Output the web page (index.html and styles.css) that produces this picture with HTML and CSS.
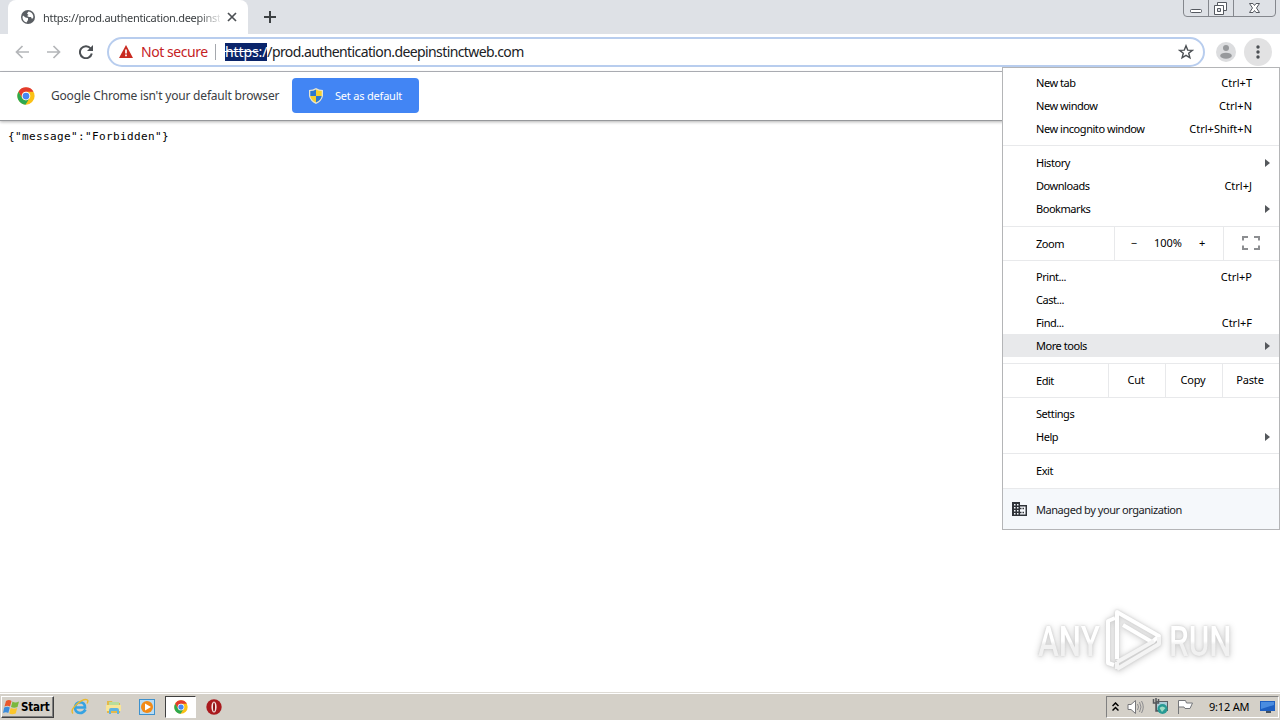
FILE: index.html
```html
<!DOCTYPE html>
<html lang="en">
<head>
  <meta charset="UTF-8">
  <title>prod.authentication.deepinstinctweb.com</title>
  <link rel="stylesheet" href="styles.css">
</head>
<body>
  <svg width="0" height="0" class="defs">
    <symbol id="chrome" viewBox="0 0 48 48">
      <circle cx="24" cy="24" r="23" fill="#fbc116"/>
      <path d="M4 12.5A23 23 0 0 1 44 12.5H24A11.5 11.5 0 0 0 14 18.3L14 30Z" fill="#e33b2e"/>
      <path d="M4 12.5A23 23 0 0 0 22.5 47L32.5 31.5A11.500 11.500 0 0 1 14 29.800Z" fill="#2da94f"/>
      <circle cx="24" cy="24" r="11.500" fill="#fff"/>
      <circle cx="24" cy="24" r="9" fill="#4587f3"/>
    </symbol>
  </svg>

  <div class="tabstrip">
    <div class="tab">
      <svg class="globe" width="14" height="14" viewBox="0 0 14 14">
        <circle cx="7" cy="7" r="7" fill="#5a5e63"/>
        <path d="M2 5.500L4.500 7.500L7 8V10L5.500 12.500C3 12 1.300 9.500 1.500 7ZM7.500 1.500L6 3.500L7.500 5L6 6L8 7H10L11 9L12.300 7.500C12.700 4.500 10.500 2 7.500 1.500Z" fill="#fff"/>
      </svg>
      <span class="tab-title">https://prod.authentication.deepinst</span>
      <svg width="10" height="10" viewBox="0 0 10 10"><path d="M1 1L9 9M9 1L1 9" stroke="#4c5054" stroke-width="1.700"/></svg>
    </div>
    <svg class="new-tab" width="12" height="12" viewBox="0 0 12 12"><path d="M6 0V12M0 6H12" stroke="#3c4043" stroke-width="2"/></svg>
    <svg class="window-buttons" width="93" height="17" viewBox="0 0 93 17">
      <path d="M.5 0V13Q.5 16.500 4 16.500H89Q92.500 16.500 92.500 13V0M25.500 0V16M50.500 0V16" fill="none" stroke="#84878d"/>
      <rect x="7.500" y="9.500" width="11" height="3" rx="1" fill="#fff" stroke="#555960"/>
      <path d="M34.500 2.500H43.500V10.500H34.500Z" fill="#fff" stroke="#555960"/>
      <path d="M31.500 5.500H40.500V14.500H31.500Z" fill="#fff" stroke="#555960"/>
      <path d="M34.500 8.500H37.500V11.500H34.500Z" fill="#dee1e6" stroke="#555960"/>
      <path d="M66.500 3.500H70L71.500 5.500L73 3.500H76.500L73.500 8L76.500 12.500H73L71.500 10.500L70 12.500H66.500L69.500 8Z" fill="#fff" stroke="#555960"/>
    </svg>
  </div>

  <div class="toolbar">
    <svg width="14" height="14" viewBox="0 0 14 14" fill="none" stroke="#b4b6b9" stroke-width="1.700"><path d="M14 7H1.500M7.500 1L1.500 7L7.500 13"/></svg>
    <svg width="14" height="14" viewBox="0 0 14 14" fill="none" stroke="#b4b6b9" stroke-width="1.700"><path d="M0 7H12.500M6.500 1L12.500 7L6.500 13"/></svg>
    <svg width="14" height="14" viewBox="0 0 14 14"><path d="M11.700 3.500A6 6 0 1 0 12.800 8.500" fill="none" stroke="#4c5054" stroke-width="2"/><path d="M14 0V6H8Z" fill="#4c5054"/></svg>
    <div class="omnibox">
      <svg width="14" height="13" viewBox="0 0 14 13"><path d="M7 0L14 13H0Z" fill="#c92b21"/><path d="M7 4.500V8.500M7 9.500V11.200" stroke="#fff" stroke-width="1.700"/></svg>
      <span class="not-secure">Not secure</span>
      <span class="divider"></span>
      <span class="url"><span class="selected"><s>https</s>:/</span>/prod.authentication.deepinstinctweb.com</span>
      <svg class="star" width="16" height="16" viewBox="0 0 16 16"><path d="M8 1.800L9.700 6.100L14.300 6.400L10.700 9.300L11.900 13.800L8 11.300L4.100 13.800L5.300 9.300L1.700 6.400L6.300 6.100Z" fill="none" stroke="#4c5054" stroke-width="1.400"/></svg>
    </div>
    <svg class="avatar" width="20" height="20" viewBox="0 0 20 20"><circle cx="10" cy="10" r="10" fill="#dcdddf"/><circle cx="10" cy="6" r="3" fill="#97999c"/><ellipse cx="10" cy="13.700" rx="5.800" ry="3" fill="#97999c"/></svg>
    <svg class="dots" width="28" height="28" viewBox="0 0 28 28"><circle cx="14" cy="14" r="14" fill="#e2e2e3"/><g fill="#4c5054"><circle cx="14" cy="9" r="1.700"/><circle cx="14" cy="14" r="1.700"/><circle cx="14" cy="19" r="1.700"/></g></svg>
  </div>

  <div class="infobar">
    <svg width="18" height="18"><use href="#chrome"/></svg>
    <span class="info-text">Google Chrome isn't your default browser</span>
    <button class="set-default">
      <svg width="14" height="16" viewBox="0 0 14 16">
        <path d="M7 0Q10 2 14 2V8Q13 13 7 16Q1 13 0 8V2Q4 2 7 0Z" fill="#e8e5cf"/>
        <path d="M7 1.500V8H1.300V3Q4.500 3 7 1.500ZM7 8H12.700Q12 12 7 14.600Z" fill="#2d78cf"/>
        <path d="M7 1.500V8H12.700V3Q9.500 3 7 1.500ZM7 8H1.300Q2 12 7 14.600Z" fill="#f6d02e"/>
      </svg>
      <span>Set as default</span>
    </button>
  </div>

  <pre class="page">{"message":"Forbidden"}</pre>

  <div class="menu">
    <div class="group first">
      <div class="item">New tab<span class="key">Ctrl+T</span></div>
      <div class="item">New window<span class="key">Ctrl+N</span></div>
      <div class="item">New incognito window<span class="key">Ctrl+Shift+N</span></div>
    </div>
    <div class="group">
      <div class="item">History<span class="arrow"></span></div>
      <div class="item">Downloads<span class="key">Ctrl+J</span></div>
      <div class="item">Bookmarks<span class="arrow"></span></div>
    </div>
    <div class="controls">
      <span class="label">Zoom</span>
      <div class="zoom">
        <span>−</span><span>100%</span><span>+</span>
      </div>
      <div class="fullscreen">
        <svg width="18" height="14" viewBox="0 0 18 14"><path d="M1 4.500V1H6M12 1H17V4.500M17 9.500V13H12M6 13H1V9.500" fill="none" stroke="#8c8e91" stroke-width="2"/></svg>
      </div>
    </div>
    <div class="group tools">
      <div class="item">Print...<span class="key">Ctrl+P</span></div>
      <div class="item">Cast...</div>
      <div class="item">Find...<span class="key">Ctrl+F</span></div>
      <div class="item active">More tools<span class="arrow"></span></div>
    </div>
    <div class="controls">
      <span class="label edit">Edit</span>
      <span class="cell">Cut</span>
      <span class="cell">Copy</span>
      <span class="cell">Paste</span>
    </div>
    <div class="group settings">
      <div class="item">Settings</div>
      <div class="item">Help<span class="arrow"></span></div>
    </div>
    <div class="group">
      <div class="item">Exit</div>
    </div>
    <div class="managed">
      <svg width="15" height="14" viewBox="0 0 15 14">
        <path d="M0 0H8V3H15V14H0Z" fill="#2f3338"/>
        <path d="M2 2H3.500V3.500H2ZM5 2H6.500V3.500H5ZM2 5H3.500V6.500H2ZM5 5H6.500V6.500H5ZM2 8H3.500V9.500H2ZM5 8H6.500V9.500H5ZM2 11H3.500V12.500H2ZM5 11H6.500V12.500H5ZM8 4.500H13.500V12.500H8Z" fill="#f7fafd"/>
        <path d="M8 6.500H9.500M8 10.500H9.500M10.500 6.500H12M10.500 10.500H12" stroke="#2f3338" stroke-width="1.500"/>
      </svg>
      <span>Managed by your organization</span>
    </div>
  </div>

  <div class="watermark">
    <span>ANY</span>
    <svg width="58" height="66" viewBox="0 0 58 66" fill="none" stroke="#fff" stroke-width="4" stroke-linejoin="round">
      <path d="M11 51V4L53 28L46 34L17 17"/>
      <path d="M9 10L2 13V55L8 57"/>
      <path d="M11 54L48 33M11 61L53 36V29M11 54V61" stroke="#f4f4f4"/>
    </svg>
    <span>RUN</span>
  </div>

  <div class="taskbar">
    <div class="start">
      <svg width="17" height="16" viewBox="0 0 17 16">
        <path d="M3 2Q6 0 8.500 2L7 7.500Q4.500 6 1.500 7.500Z" fill="#e9572b"/>
        <path d="M9.500 2.500Q12 4.500 16 2.500L14.500 8Q11 9.500 8 8Z" fill="#7ab83c"/>
        <path d="M1.200 8.500Q4.500 7 6.800 8.500L5.300 14Q3 12.500 0 14Z" fill="#3b8cdb"/>
        <path d="M7.700 9Q11 10.500 14.200 9L12.700 14.500Q9 16 6.200 14.500Z" fill="#fbc62b"/>
      </svg>
      <span>Start</span>
    </div>
    <div class="quick">
      <svg width="18" height="18" viewBox="0 0 18 18">
        <path d="M14.500 11.500Q12.500 15 9 15Q4 14.500 4 9.500Q4.500 4.500 9 4.300Q14 4.500 14 9.500H5" fill="none" stroke="#36a3e2" stroke-width="2.600"/>
        <path d="M2 15.500Q-1 12 6 6Q13 0 16.500 2Q17.500 3 16 5.500" fill="none" stroke="#e9b92e" stroke-width="1.400"/>
      </svg>
      <svg width="16" height="16" viewBox="0 0 16 16">
        <path d="M1 2H6L7 4H14V14H1Z" fill="#e4b949"/>
        <path d="M3 3H13V8H3Z" fill="#b9dd9b"/>
        <path d="M0 6H15V12H0Z" fill="#f8e597"/>
        <path d="M3 15V11Q3 9 5 9H11Q13 9 13 11V15H11V12H5V15Z" fill="#5eb3e2"/>
      </svg>
      <svg width="16" height="16" viewBox="0 0 16 16">
        <rect x=".5" y=".5" width="15" height="15" fill="#b8dcf4" stroke="#3d91cd"/>
        <circle cx="8" cy="8" r="6" fill="#f28a16"/>
        <path d="M6 4.500L12 8L6 11.500Z" fill="#fff"/>
      </svg>
      <div class="running"><svg width="14" height="14"><use href="#chrome"/></svg></div>
      <svg width="16" height="16" viewBox="0 0 16 16">
        <circle cx="8" cy="8" r="7.700" fill="#a91a1e"/>
        <ellipse cx="8" cy="8" rx="2.600" ry="5.500" fill="#f6e7e5"/>
        <ellipse cx="8" cy="8" rx="1" ry="4.500" fill="#8c1014"/>
      </svg>
    </div>
    <div class="tray">
      <svg width="7" height="10" viewBox="0 0 7 10"><path d="M.5 4L3.500 1L6.500 4M.5 8.500L3.500 5.500L6.500 8.500" fill="none" stroke="#000" stroke-width="1.500"/></svg>
      <svg width="17" height="16" viewBox="0 0 17 16"><path d="M1 5.500H4L8.500 1.500V14.500L4 10.500H1Z" fill="#fff" stroke="#77777a"/><path d="M10.500 5Q12.500 8 10.500 11M12.500 3Q15.500 8 12.500 13M14.500 2Q18 8 14.500 14" fill="none" stroke="#8b8b8e"/></svg>
      <svg width="17" height="17" viewBox="0 0 17 17">
        <rect x="4.500" y="3.500" width="11" height="9" fill="#a9cdd8" stroke="#5b5f63"/>
        <path d="M1.500 1V5H6.500V1M4 0V13H8" fill="none" stroke="#55585c" stroke-width="1.500"/>
        <circle cx="10.500" cy="11" r="5" fill="#279a94"/><path d="M7.500 10Q10 7 13.500 10L10 14Z" fill="#9cdbc3"/>
      </svg>
      <svg width="16" height="16" viewBox="0 0 16 16"><path d="M1.500 15V1.500H8.500L9.500 4H15.500L13 9.500H8L7 8H2" fill="#fff" stroke="#75777a"/></svg>
      <span class="clock">9:12 AM</span>
      <svg width="16" height="14" viewBox="0 0 16 14"><path d="M0 1H15V11H0Z" fill="#1e5fc1"/><path d="M1 2H14V5L1 9Z" fill="#4a8ce0"/><path d="M6 11H11V13H6Z" fill="#43515f"/></svg>
    </div>
  </div>
</body>
</html>
```
FILE: styles.css
```css
* {
  box-sizing: border-box;
}

body {
  width: 1280px;
  height: 720px;
  margin: 0;
  overflow: hidden;
  display: flex;
  flex-direction: column;
  position: relative;
  background: #fff;
  font-family: "Noto Sans", sans-serif;
  font-size: 11px;
  color: #000;
}

svg {
  display: block;
  flex: none;
}

.defs {
  position: absolute;
}

.tabstrip {
  height: 34px;
  flex: none;
  display: flex;
  background: #dee1e6;
  padding-left: 8px;
}

.tab {
  width: 240px;
  display: flex;
  align-items: center;
  background: #fff;
  border-radius: 8px 8px 0 0;
  padding: 0 0 0 13px;
}

.tab-title {
  width: 177px;
  margin: 0 7px 0 8px;
  white-space: nowrap;
  color: #3c4043;
  letter-spacing: -0.3px;
  mask-image: linear-gradient(to right, #000 155px, transparent 180px);
}

.new-tab {
  margin: 11px 0 0 16px;
}

.window-buttons {
  margin-left: auto;
  margin-right: 4px;
}

.toolbar {
  height: 38px;
  flex: none;
  display: flex;
  align-items: center;
  padding: 0 8px 2px 15px;
  gap: 18px;
  border-bottom: 1px solid #b3b5bb;
}

.omnibox {
  width: 1098px;
  height: 30px;
  margin-left: -4px;
  display: flex;
  align-items: center;
  padding: 0 9px 0 10px;
  border: 2px solid #b8cdee;
  border-radius: 15px;
  font-size: 14px;
}

.not-secure {
  margin-left: 8px;
  width: 67px;
  white-space: nowrap;
  color: #c5221f;
  letter-spacing: -0.45px;
}

.divider {
  width: 1px;
  height: 16px;
  margin: 0 9px 0 7px;
  background: #a5a8ad;
}

.url {
  color: #202124;
  white-space: nowrap;
  letter-spacing: -0.6px;
}

.selected {
  display: inline-block;
  height: 18px;
  line-height: 18px;
  background: #0a246a;
  color: #fff;
  letter-spacing: -0.1px;
}

.star {
  margin-left: auto;
}

.avatar {
  margin-left: -7px;
}

.dots {
  margin-left: -10px;
}

.infobar {
  height: 49px;
  flex: none;
  display: flex;
  align-items: center;
  padding: 0 0 1px 17px;
  border-bottom: 1px solid #96989b;
  box-shadow: 0 1px 3px rgba(0, 0, 0, 0.3);
  font-size: 12px;
  color: #3c4043;
}

.info-text {
  width: 241px;
  padding-left: 16px;
  white-space: nowrap;
  letter-spacing: -0.19px;
}

.set-default {
  width: 127px;
  height: 35px;
  margin-left: 16px;
  display: flex;
  align-items: center;
  gap: 12px;
  padding: 0 0 0 17px;
  border: none;
  border-radius: 4px;
  background: #4285f4;
  color: #fff;
  font-family: inherit;
  font-size: 11px;
  letter-spacing: -0.2px;
  white-space: nowrap;
}

.page {
  flex: 1;
  margin: 0;
  padding: 9px 8px;
  font: 11px/14px "DejaVu Sans Mono", monospace;
  letter-spacing: 0.38px;
}

.menu {
  position: absolute;
  left: 1002px;
  top: 67px;
  width: 278px;
  height: 463px;
  background: #fff;
  border: 1px solid #b4b5b7;
  letter-spacing: -0.45px;
}

.group {
  padding: 5px 0 6px;
  border-bottom: 1px solid #e8e9eb;
}

.group.first {
  padding: 3px 0 5px;
}

.group.tools {
  padding-top: 4px;
}

.group.settings {
  padding: 4px 0 5px;
}

.item {
  height: 23px;
  display: flex;
  align-items: center;
  justify-content: space-between;
  padding: 0 27px 0 33px;
}

.item.active {
  background: #e8e9eb;
}

.key {
  letter-spacing: 0;
}

.arrow {
  margin-right: -18px;
  border-left: 5px solid #55585c;
  border-top: 4px solid transparent;
  border-bottom: 4px solid transparent;
}

.controls {
  height: 34px;
  display: flex;
  align-items: center;
  border-bottom: 1px solid #e8e9eb;
}

.label {
  width: 111px;
  padding-left: 33px;
}

.label.edit {
  width: 105px;
}

.zoom,
.fullscreen,
.cell {
  height: 33px;
  display: flex;
  align-items: center;
  justify-content: center;
  border-left: 1px solid #e8e9eb;
  padding: 0 2px 2px 0;
}

.zoom {
  width: 109px;
  gap: 17px;
  letter-spacing: 0;
}

.fullscreen {
  flex: 1;
}

.cell {
  width: 57px;
  letter-spacing: -0.2px;
}

.managed {
  height: 40px;
  display: flex;
  align-items: center;
  gap: 9px;
  padding-left: 9px;
  background: #f5f8fb;
  color: #202124;
}

.watermark {
  position: absolute;
  left: 1038px;
  top: 608px;
  display: flex;
  align-items: center;
  gap: 5px;
  font: 500 43px/66px "Roboto", sans-serif;
  filter: drop-shadow(0 0 1px #ccc) drop-shadow(0 1px 3px #ccc);
}

.watermark span {
  width: 63px;
  transform: scaleX(0.73);
  transform-origin: left;
  color: transparent;
  background: linear-gradient(#fff 50%, #f1f1f1 55%);
  background-clip: text;
  /* keeps the gradient under the part that overflows before scaling */
  padding-right: 30px;
  margin-right: -30px;
  box-sizing: content-box;
}

.taskbar {
  height: 28px;
  flex: none;
  display: flex;
  align-items: center;
  background: #d4d0c8;
  border-top: 1px solid #dedbd5;
  box-shadow: inset 0 1px #fff;
  padding: 0 0 0 1px;
}

.start {
  width: 53px;
  height: 22px;
  display: flex;
  align-items: center;
  gap: 1px;
  padding-left: 1px;
  border: 1px solid;
  border-color: #fff #404040 #404040 #fff;
  box-shadow: inset -1px -1px #808080;
  font: bold 11.5px "DejaVu Sans Condensed", sans-serif;
  letter-spacing: -0.2px;
}

.quick {
  display: flex;
  align-items: center;
  margin-left: 17px;
}

.quick > svg {
  margin-right: 17px;
}

.quick > svg:nth-child(3) {
  margin-right: 10px;
}

.running {
  width: 31px;
  height: 22px;
  display: flex;
  align-items: center;
  justify-content: center;
  margin-right: 10px;
  background: #fff;
  border: 1px solid;
  border-color: #404040 #fff #fff #404040;
}

.tray {
  width: 173px;
  height: 22px;
  margin-left: auto;
  margin-right: 1px;
  display: flex;
  align-items: center;
  padding-left: 5px;
  gap: 8px;
  border: 1px solid;
  border-color: #808080 #fff #fff #808080;
}

.clock {
  margin-left: 8px;
  width: 43px;
  white-space: nowrap;
  letter-spacing: -0.2px;
}
```
